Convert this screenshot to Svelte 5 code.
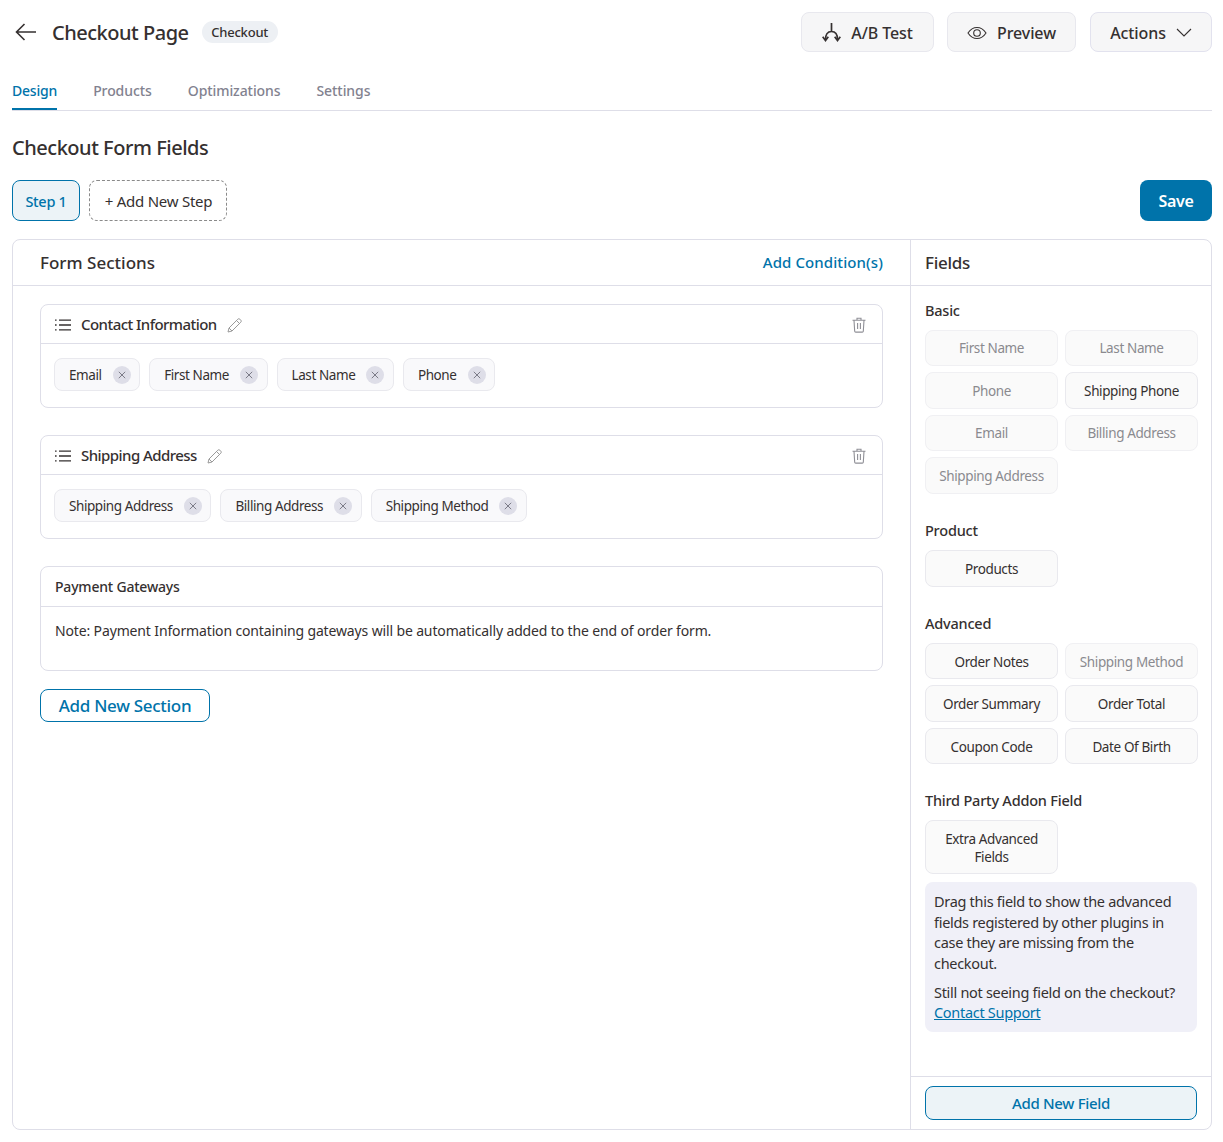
<script lang="ts">
	const sections = [
		{ title: 'Contact Information', fields: ['Email', 'First Name', 'Last Name', 'Phone'] },
		{ title: 'Shipping Address', fields: ['Shipping Address', 'Billing Address', 'Shipping Method'] }
	];

	const groups = [
		{
			label: 'Basic',
			items: [
				{ name: 'First Name', off: true },
				{ name: 'Last Name', off: true },
				{ name: 'Phone', off: true },
				{ name: 'Shipping Phone' },
				{ name: 'Email', off: true },
				{ name: 'Billing Address', off: true },
				{ name: 'Shipping Address', off: true }
			]
		},
		{ label: 'Product', items: [{ name: 'Products' }] },
		{
			label: 'Advanced',
			items: [
				{ name: 'Order Notes' },
				{ name: 'Shipping Method', off: true },
				{ name: 'Order Summary' },
				{ name: 'Order Total' },
				{ name: 'Coupon Code' },
				{ name: 'Date Of Birth' }
			]
		}
	];

	const tabs = ['Design', 'Products', 'Optimizations', 'Settings'];
</script>

<div class="page">
	<header class="top">
		<div class="title-wrap">
			<svg class="back" width="22" height="18" viewBox="0 0 22 18" fill="none" stroke="#353030" stroke-width="1.6">
				<path d="M21 9H1.5M9.5 1 1.5 9l8 8" />
			</svg>
			<h1>Checkout Page</h1>
			<span class="badge">Checkout</span>
		</div>
		<div class="top-actions">
			<button class="ghost ab">
				<svg width="19" height="19" viewBox="0 0 19 19" fill="none" stroke="#353030" stroke-width="1.7">
					<path d="M9.500 0v8.500M9.500 8.500C5.500 8.500 3.500 11.500 3.500 16.500M9.500 8.500c4 0 6 3 6 8" />
					<path d="M.7 13.800 3.500 17.500l2.800-3.700M12.700 13.800l2.800 3.700 2.800-3.700" />
				</svg>
				A/B Test
			</button>
			<button class="ghost preview">
				<svg width="20" height="14" viewBox="0 0 20 14" fill="none" stroke="#353030" stroke-width="1.1">
					<path d="M1 7c2.500-3.800 5.500-5.500 9-5.500S16.500 3.200 19 7c-2.500 3.800-5.500 5.500-9 5.500S3.500 10.800 1 7Z" />
					<circle cx="10" cy="7" r="3.300" />
				</svg>
				Preview
			</button>
			<button class="ghost actions">
				Actions
				<svg width="16" height="9" viewBox="0 0 16 9" fill="none" stroke="#353030" stroke-width="1.1">
					<path d="m1 1 7 7 7-7" />
				</svg>
			</button>
		</div>
	</header>

	<nav class="tabs">
		{#each tabs as tab, i}
			<span class="tab" class:active={i === 0}>{tab}</span>
		{/each}
	</nav>

	<h2>Checkout Form Fields</h2>

	<div class="steps">
		<button class="step">Step 1</button>
		<button class="new-step">+ Add New Step</button>
		<button class="save">Save</button>
	</div>

	<div class="panel">
		<section class="left">
			<div class="panel-head left-head">
				<span>Form Sections</span>
				<span class="link">Add Condition(s)</span>
			</div>
			<div class="left-body">
				{#each sections as s}
					<div class="card">
						<div class="card-head">
							<svg class="list" width="16" height="12" viewBox="0 0 16 12" fill="none" stroke="#353030" stroke-width="1.300">
								<path d="M4 1.200h12M4 6h12M4 10.800h12M0 1.200h1.600M0 6h1.600M0 10.800h1.600" />
							</svg>
							<span class="card-title">{s.title}</span>
							<svg class="pencil" width="15" height="15" viewBox="0 0 15 15" fill="none" stroke="#9a9a9a" stroke-width="1">
								<path d="M1 14l1-4L10.800 1.200a1.500 1.500 0 0 1 2.100 0l.9.900a1.500 1.500 0 0 1 0 2.100L5 13Zm1-4 3 3M9.500 2.500l3 3" />
							</svg>
							<svg class="trash" width="14" height="16" viewBox="0 0 14 16" fill="none" stroke="#8f8f96" stroke-width="1.100">
								<path d="M.5 3.200h13M5 3V1.200h4V3M2 3.200l.7 11a1 1 0 0 0 1 .9h6.600a1 1 0 0 0 1-.9l.7-11M5.600 6v6M8.400 6v6" />
							</svg>
						</div>
						<div class="chips">
							{#each s.fields as f}
								<span class="chip">
									{f}
									<span class="x">
										<svg width="8" height="8" viewBox="0 0 8 8" stroke="#6f6f7c" stroke-width="0.900"><path d="m.8.800 6.400 6.400M7.200.800.800 7.200" /></svg>
									</span>
								</span>
							{/each}
						</div>
					</div>
				{/each}

				<div class="card">
					<div class="card-head pay-head">Payment Gateways</div>
					<p class="note">Note: Payment Information containing gateways will be automatically added to the end of order form.</p>
				</div>

				<button class="add-section">Add New Section</button>
			</div>
		</section>

		<aside class="right">
			<div class="panel-head right-head">Fields</div>
			<div class="right-body">
				{#each groups as g}
					<div class="group">
						<div class="group-label">{g.label}</div>
						<div class="field-grid">
							{#each g.items as item}
								<span class="field" class:off={item.off}>{item.name}</span>
							{/each}
						</div>
					</div>
				{/each}
				<div class="group last">
					<div class="group-label">Third Party Addon Field</div>
					<div class="field-grid">
						<span class="field tall">Extra Advanced Fields</span>
					</div>
					<div class="info">
						<p>Drag this field to show the advanced fields registered by other plugins in case they are missing from the checkout.</p>
						<p>Still not seeing field on the checkout? <a href="#support">Contact Support</a></p>
					</div>
				</div>
			</div>
			<div class="right-foot">
				<button class="add-field">Add New Field</button>
			</div>
		</aside>
	</div>
</div>

<style>
	:global(body) {
		background: #fff;
		font-family: 'Noto Sans', 'Open Sans', sans-serif;
		color: #353030;
	}

	button {
		font-family: inherit;
		cursor: pointer;
	}

	.page {
		width: 1200px;
		margin-left: 12px;
		height: 1130px;
		display: flex;
		flex-direction: column;
	}

	.top {
		display: flex;
		justify-content: space-between;
		align-items: flex-start;
		padding-top: 12px;
		height: 40px;
	}

	.title-wrap {
		display: flex;
		align-items: center;
		height: 40px;
	}

	.back {
		margin-left: 3px;
		margin-right: 15px;
	}

	h1 {
		margin: 0;
		font-size: 20px;
		font-weight: 500;
		letter-spacing: -0.48px;
		color: #353030;
	}

	.badge {
		margin-left: 13px;
		height: 22px;
		width: 76px;
		border-radius: 11px;
		background: #edf0f4;
		font-size: 13px;
		font-weight: 500;
		letter-spacing: -0.2px;
		display: flex;
		align-items: center;
		justify-content: center;
	}

	.top-actions {
		display: flex;
		gap: 13px;
	}

	.ghost {
		height: 40px;
		background: #f6f6f7;
		border: 1px solid #e8e8ee;
		border-radius: 8px;
		font-size: 16px;
		font-weight: 500;
		letter-spacing: -0.1px;
		color: #353030;
		display: flex;
		align-items: center;
		justify-content: center;
		padding: 1px 0 0;
	}

	.ab { width: 133px; gap: 10px; }
	.preview { width: 129px; gap: 10px; }
	.actions { width: 122px; gap: 10px; margin-left: 1px; border-color: #e2e2ee; }

	.tabs {
		display: flex;
		gap: 36px;
		margin-top: 20px;
		height: 38px;
		border-bottom: 1px solid #dedee8;
	}

	.tab {
		font-size: 14px;
		font-weight: 500;
		letter-spacing: -0.08px;
		color: #82828f;
		line-height: 37px;
		height: 38px;
		box-sizing: border-box;
	}

	.tab.active {
		color: #0073aa;
		border-bottom: 2px solid #0073aa;
		letter-spacing: -0.2px;
	}

	h2 {
		margin: 23px 0 0;
		font-size: 20px;
		line-height: 27px;
		font-weight: 500;
		letter-spacing: -0.47px;
		color: #353030;
	}

	.steps {
		display: flex;
		gap: 9px;
		margin-top: 19px;
		height: 41px;
	}

	.step {
		width: 68px;
		background: #ecf3f7;
		border: 1px solid #0073aa;
		border-radius: 8px;
		color: #0073aa;
		font-size: 14.500px;
		font-weight: 500;
		letter-spacing: -0.3px;
		padding: 0;
	}

	.new-step {
		width: 138px;
		background: #fff;
		border: 1px dashed #8a8a8a;
		border-radius: 8px;
		color: #353030;
		font-size: 15px;
		letter-spacing: -0.24px;
		padding: 0 0 0 1px;
	}

	.save {
		margin-left: auto;
		width: 72px;
		background: #0073aa;
		border: 0;
		border-radius: 8px;
		color: #fff;
		font-size: 16px;
		font-weight: 600;
		letter-spacing: -0.3px;
		padding: 0;
	}

	.panel {
		flex: 1;
		margin-top: 18px;
		display: flex;
		border: 1px solid #dedee8;
		border-radius: 8px;
		min-height: 0;
	}

	.left {
		flex: none;
		width: 897px;
		border-right: 1px solid #dedee8;
		display: flex;
		flex-direction: column;
	}

	.panel-head {
		height: 45px;
		border-bottom: 1px solid #dedee8;
		display: flex;
		align-items: center;
		font-size: 17px;
		font-weight: 500;
		letter-spacing: -0.3px;
	}

	.left-head {
		justify-content: space-between;
		padding: 0 27px;
		letter-spacing: 0;
	}

	.link {
		color: #0073aa;
		font-size: 15px;
		font-weight: 500;
		letter-spacing: 0.09px;
		margin-top: -2px;
	}

	.left-body {
		padding: 18px 27px;
		display: flex;
		flex-direction: column;
		gap: 27px;
		align-items: flex-start;
	}

	.card {
		align-self: stretch;
		border: 1px solid #dedee8;
		border-radius: 8px;
	}

	.card-head {
		height: 38px;
		border-bottom: 1px solid #dedee8;
		display: flex;
		align-items: center;
		padding: 0 14px;
	}

	.list {
		margin-top: 2px;
	}

	.card-title {
		margin-left: 10px;
		font-size: 15px;
		font-weight: 500;
		letter-spacing: -0.55px;
		color: #353030;
	}

	.pencil {
		margin-left: 10px;
		margin-top: 2px;
	}

	.trash {
		margin-left: auto;
		margin-right: 2px;
		margin-top: 2px;
	}

	.chips {
		padding: 14px 13px 16px;
		display: flex;
		gap: 9px;
	}

	.chip {
		height: 31px;
		border: 1px solid #e9e9ee;
		border-radius: 8px;
		background: #f9f9fb;
		display: flex;
		align-items: center;
		gap: 11px;
		padding: 0 8.600px 0 14px;
		font-size: 13.500px;
		letter-spacing: -0.42px;
		color: #353030;
	}

	.x {
		width: 18px;
		height: 18px;
		border-radius: 50%;
		background: #dedee8;
		display: flex;
		align-items: center;
		justify-content: center;
	}

	.pay-head {
		height: 39px;
		font-size: 14px;
		font-weight: 500;
		letter-spacing: -0.2px;
	}

	.note {
		margin: 0;
		padding: 14px 14px 29px;
		font-size: 14px;
		line-height: 20px;
		letter-spacing: -0.14px;
		color: #353030;
	}

	.add-section {
		margin-top: -9px;
		width: 170px;
		height: 33px;
		background: #fff;
		border: 1px solid #0073aa;
		border-radius: 8px;
		color: #0073aa;
		font-size: 17px;
		font-weight: 500;
		letter-spacing: -0.3px;
		padding: 0;
	}

	.right {
		flex: 1;
		min-width: 0;
		display: flex;
		flex-direction: column;
	}

	.right-head {
		padding: 0 14px;
	}

	.right-body {
		flex: 1;
		padding: 14.500px 14px 0;
	}

	.group {
		margin-bottom: 27.250px;
	}

	.group.last {
		margin-bottom: 0;
		margin-top: -0.500px;
	}

	.group-label {
		font-size: 14.500px;
		font-weight: 500;
		letter-spacing: -0.22px;
		line-height: 19px;
		margin-bottom: 10px;
	}

	.field-grid {
		display: grid;
		grid-template-columns: 133px 133px;
		gap: 6.100px 7px;
	}

	.field {
		min-height: 36.500px;
		box-sizing: border-box;
		border: 1px solid #e9e9ee;
		border-radius: 8px;
		background: #fafafa;
		display: flex;
		align-items: center;
		justify-content: center;
		text-align: center;
		font-size: 13.500px;
		line-height: 18px;
		letter-spacing: -0.38px;
		color: #353030;
		padding-top: 1px;
	}

	.field.off {
		color: #8a8a8f;
		border-color: #f0f0f3;
	}

	.field.tall {
		height: 54px;
		padding: 1px 14px 0;
	}

	.info {
		margin-top: 8px;
		background: #f0f0f8;
		border-radius: 8px;
		padding: 9px 9px 9px;
		font-size: 14.500px;
		line-height: 20.600px;
		letter-spacing: -0.3px;
		color: #353030;
	}

	.info p {
		margin: 0;
	}

	.info p + p {
		margin-top: 8px;
	}

	.info a {
		color: #0073aa;
	}

	.right-foot {
		height: 53px;
		border-top: 1px solid #dedee8;
		padding: 9px 14px 0;
		box-sizing: border-box;
	}

	.add-field {
		width: 272px;
		height: 34px;
		background: #ecf3f7;
		border: 1px solid #0073aa;
		border-radius: 8px;
		color: #0073aa;
		font-size: 15px;
		font-weight: 500;
		letter-spacing: -0.34px;
		padding: 0;
	}
</style>
